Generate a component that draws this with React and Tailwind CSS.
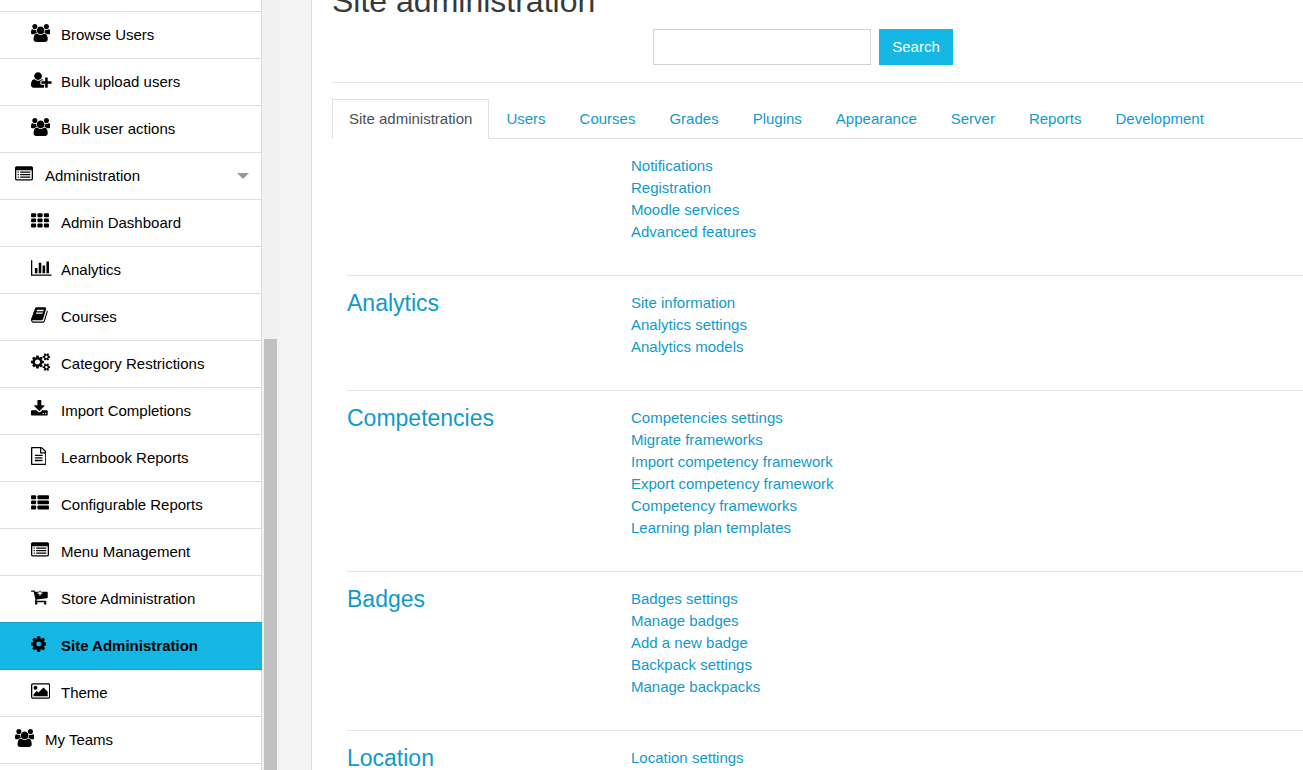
import React, { useState } from 'react'

// Each icon: width of its viewBox, left edge of it, and the shape
const ICONS = {
  users: {
    w: 1920,
    d: 'M593 896q-162 5-265 128h-134q-82 0-138-40.5t-56-118.5q0-353 124-353 6 0 43.5 21t97.5 42.5 119 21.5q67 0 133-23-5 37-5 66 0 139 81 256zm1071 637q0 120-73 189.5t-194 69.5h-874q-121 0-194-69.5t-73-189.5q0-53 3.5-103.5t14-109 26.5-108.5 43-97.5 62-81 85.5-53.5 111.5-20q10 0 43 21.5t73 48 107 48 135 21.5 135-21.5 107-48 73-48 43-21.5q61 0 111.5 20t85.5 53.5 62 81 43 97.5 26.5 108.5 14 109 3.5 103.5zm-1024-1277q0 106-75 181t-181 75-181-75-75-181 75-181 181-75 181 75 75 181zm704 384q0 159-112.5 271.5t-271.5 112.5-271.5-112.5-112.5-271.5 112.5-271.5 271.5-112.5 271.5 112.5 112.5 271.5zm576 225q0 78-56 118.5t-138 40.5h-134q-103-123-265-128 81-117 81-256 0-29-5-66 66 23 133 23 59 0 119-21.5t97.5-42.5 43.5-21q124 0 124 353zm-128-609q0 106-75 181t-181 75-181-75-75-181 75-181 181-75 181 75 75 181z',
  },
  userPlus: {
    w: 2048,
    d: 'M704 896q-159 0-271.5-112.5t-112.5-271.5 112.5-271.5 271.5-112.5 271.5 112.5 112.5 271.5-112.5 271.5-271.5 112.5zm960 128h352q13 0 22.5 9.5t9.5 22.5v192q0 13-9.5 22.5t-22.5 9.5h-352v352q0 13-9.5 22.5t-22.5 9.5h-192q-13 0-22.5-9.5t-9.5-22.5v-352h-352q-13 0-22.5-9.5t-9.5-22.5v-192q0-13 9.5-22.5t22.5-9.5h352v-352q0-13 9.5-22.5t22.5-9.5h192q13 0 22.5 9.5t9.5 22.5v352zm-736 224q0 52 38 90t90 38h256v238q-68 50-171 50h-874q-121 0-194-69t-73-190q0-53 3.5-103.5t14-109 26.5-108.5 43-97.5 62-81 85.5-53.5 111.5-20q19 0 39 17 79 61 154.5 91.5t164.5 30.5 164.5-30.5 154.5-91.5q20-17 39-17 132 0 217 96h-223q-52 0-90 38t-38 90v192z',
  },
  listAlt: {
    w: 1792,
    d: 'M384 1184v64q0 13-9.5 22.5t-22.5 9.5h-64q-13 0-22.5-9.5t-9.5-22.5v-64q0-13 9.5-22.5t22.5-9.5h64q13 0 22.5 9.5t9.5 22.5zm0-256v64q0 13-9.5 22.5t-22.5 9.5h-64q-13 0-22.5-9.5t-9.5-22.5v-64q0-13 9.5-22.5t22.5-9.5h64q13 0 22.5 9.5t9.5 22.5zm0-256v64q0 13-9.5 22.5t-22.5 9.5h-64q-13 0-22.5-9.5t-9.5-22.5v-64q0-13 9.5-22.5t22.5-9.5h64q13 0 22.5 9.5t9.5 22.5zm1152 512v64q0 13-9.5 22.5t-22.5 9.5h-960q-13 0-22.5-9.5t-9.5-22.5v-64q0-13 9.5-22.5t22.5-9.5h960q13 0 22.5 9.5t9.5 22.5zm0-256v64q0 13-9.5 22.5t-22.5 9.5h-960q-13 0-22.5-9.5t-9.5-22.5v-64q0-13 9.5-22.5t22.5-9.5h960q13 0 22.5 9.5t9.5 22.5zm0-256v64q0 13-9.5 22.5t-22.5 9.5h-960q-13 0-22.5-9.5t-9.5-22.5v-64q0-13 9.5-22.5t22.5-9.5h960q13 0 22.5 9.5t9.5 22.5zm128 704v-832q0-13-9.5-22.5t-22.5-9.5h-1472q-13 0-22.5 9.5t-9.5 22.5v832q0 13 9.5 22.5t22.5 9.5h1472q13 0 22.5-9.5t9.5-22.5zm128-1088v1088q0 66-47 113t-113 47h-1472q-66 0-113-47t-47-113v-1088q0-66 47-113t113-47h1472q66 0 113 47t47 113z',
  },
  th: {
    w: 1792,
    rects: [0, 640, 1280].flatMap(x => [128, 640, 1152].map(y => [x, y, 512])),
  },
  thList: {
    w: 1792,
    rects: [128, 640, 1152].flatMap(y => [[0, y, 512], [640, y, 1152]]),
  },
  barChart: {
    w: 2048,
    d: 'M640 896v512h-256v-512h256zm384-512v1024h-256v-1024h256zm1024 1152v128h-2048v-1536h128v1408h1920zm-640-896v768h-256v-768h256zm384-384v1152h-256v-1152h256z',
  },
  book: {
    w: 1664,
    x: 64,
    d: 'M1703 478q40 57 18 129l-275 906q-19 64-76.5 107.5t-122.5 43.5h-923q-77 0-148.5-53.5t-99.5-131.5q-24-67-2-127 0-4 3-27t4-37q1-8-3-21.5t-3-19.5q2-11 8-21t16.5-23.5 16.5-23.5q23-38 45-91.5t30-91.5q3-10 .5-30t-.5-28q3-11 17-28t17-23q21-36 42-92t25-90q1-9-2.5-32t.5-28q4-13 22-30.5t22-22.5q19-26 42.5-84.5t27.5-96.5q1-8-3-25.5t-2-26.5q2-8 9-18t18-23 17-21q8-12 16.5-30.5t15-35 16-36 19.5-32 26.5-23.5 36-11.5 47.5 5.5l-1 3q38-9 51-9h761q74 0 114 56t18 130l-274 906q-36 119-71.5 153.5t-128.5 34.5h-869q-27 0-38 15-11 16-1 43 24 70 144 70h923q29 0 56-15.5t35-41.5l300-987q7-22 5-57 38 15 59 43zm-1064 2q-4 13 2 22.5t20 9.5h608q13 0 25.5-9.5t16.5-22.5l21-64q4-13-2-22.5t-20-9.5h-608q-13 0-25.5 9.5t-16.5 22.5zm-83 256q-4 13 2 22.5t20 9.5h608q13 0 25.5-9.5t16.5-22.5l21-64q4-13-2-22.5t-20-9.5h-608q-13 0-25.5 9.5t-16.5 22.5z',
  },
  cogs: {
    w: 1920,
    d: 'M896 896q0-106-75-181t-181-75-181 75-75 181 75 181 181 75 181-75 75-181zm768 512q0-52-38-90t-90-38-90 38-38 90q0 53 37.5 90.5t90.5 37.5 90.5-37.5 37.5-90.5zm0-1024q0-52-38-90t-90-38-90 38-38 90q0 53 37.5 90.5t90.5 37.5 90.5-37.5 37.5-90.5zm-384 421v185q0 10-7 19.5t-16 10.5l-155 24q-11 35-32 76 34 48 90 115 7 11 7 20 0 12-7 19-23 30-82.5 89.5t-78.5 59.5q-11 0-21-7l-115-90q-37 19-77 31-11 108-23 155-7 24-30 24h-186q-11 0-20-7.5t-10-17.5l-23-153q-34-10-75-31l-118 89q-7 7-20 7-11 0-21-8-144-133-144-160 0-9 7-19 10-14 41-53t47-61q-23-44-35-82l-152-24q-10-1-17-9.5t-7-19.5v-185q0-10 7-19.5t16-10.5l155-24q11-35 32-76-34-48-90-115-7-11-7-20 0-12 7-20 22-30 82-89t79-59q11 0 21 7l115 90q34-18 77-32 11-108 23-154 7-24 30-24h186q11 0 20 7.5t10 17.5l23 153q34 10 75 31l118-89q8-7 20-7 11 0 21 8 144 133 144 160 0 8-7 19-12 16-42 54t-45 60q23 48 34 82l152 23q10 2 17 10.5t7 19.5zm640 533v140q0 16-149 31-12 27-30 52 51 113 51 138 0 4-4 7-122 71-124 71-8 0-46-47t-52-68q-20 2-30 2t-30-2q-14 21-52 68t-46 47q-2 0-124-71-4-3-4-7 0-25 51-138-18-25-30-52-149-15-149-31v-140q0-16 149-31 13-29 30-52-51-113-51-138 0-4 4-7 4-2 35-20t59-34 30-16q8 0 46 46.5t52 67.5q20-2 30-2t30 2q51-71 92-112l6-2q4 0 124 70 4 3 4 7 0 25-51 138 17 23 30 52 149 15 149 31zm0-1024v140q0 16-149 31-12 27-30 52 51 113 51 138 0 4-4 7-122 71-124 71-8 0-46-47t-52-68q-20 2-30 2t-30-2q-14 21-52 68t-46 47q-2 0-124-71-4-3-4-7 0-25 51-138-18-25-30-52-149-15-149-31v-140q0-16 149-31 13-29 30-52-51-113-51-138 0-4 4-7 4-2 35-20t59-34 30-16q8 0 46 46.5t52 67.5q20-2 30-2t30 2q51-71 92-112l6-2q4 0 124 70 4 3 4 7 0 25-51 138 17 23 30 52 149 15 149 31z',
  },
  download: {
    w: 1664,
    x: 64,
    d: 'M1344 1344q0-26-19-45t-45-19-45 19-19 45 19 45 45 19 45-19 19-45zm256 0q0-26-19-45t-45-19-45 19-19 45 19 45 45 19 45-19 19-45zm128-224v320q0 40-28 68t-68 28h-1472q-40 0-68-28t-28-68v-320q0-40 28-68t68-28h465l135 136q58 56 136 56t136-56l136-136h464q40 0 68 28t28 68zm-325-569q17 41-14 70l-448 448q-18 19-45 19t-45-19l-448-448q-31-29-14-70 17-39 59-39h256v-448q0-26 19-45t45-19h256q26 0 45 19t19 45v448h256q42 0 59 39z',
  },
  fileText: {
    w: 1536,
    x: 128,
    d: 'M1596 380q28 28 48 76t20 88v1152q0 40-28 68t-68 28h-1344q-40 0-68-28t-28-68v-1600q0-40 28-68t68-28h896q40 0 88 20t76 48zm-444-244v376h376q-10-29-22-41l-313-313q-12-12-41-22zm384 1528v-1024h-416q-40 0-68-28t-28-68v-416h-768v1536h1280zm-1024-864q0-14 9-23t23-9h704q14 0 23 9t9 23v64q0 14-9 23t-23 9h-704q-14 0-23-9t-9-23v-64zm736 224q14 0 23 9t9 23v64q0 14-9 23t-23 9h-704q-14 0-23-9t-9-23v-64q0-14 9-23t23-9h704zm0 256q14 0 23 9t9 23v64q0 14-9 23t-23 9h-704q-14 0-23-9t-9-23v-64q0-14 9-23t23-9h704z',
  },
  cartPlus: {
    w: 1664,
    x: 64,
    d: 'M1216 512q0-26-19-45t-45-19h-128v-128q0-26-19-45t-45-19-45 19-19 45v128h-128q-26 0-45 19t-19 45 19 45 45 19h128v128q0 26 19 45t45 19 45-19 19-45v-128h128q26 0 45-19t19-45zm-512 1024q0 53-37.5 90.5t-90.5 37.5-90.5-37.5-37.5-90.5 37.5-90.5 90.5-37.5 90.5 37.5 37.5 90.5zm896 0q0 53-37.5 90.5t-90.5 37.5-90.5-37.5-37.5-90.5 37.5-90.5 90.5-37.5 90.5 37.5 37.5 90.5zm128-1088v512q0 24-16 42.5t-41 21.5l-1044 122q1 7 4.5 21.5t6 26.5 2.5 22q0 16-24 64h920q26 0 45 19t19 45-19 45-45 19h-1024q-26 0-45-19t-19-45q0-14 11-39.5t29.5-59.5 20.5-38l-177-823h-204q-26 0-45-19t-19-45 19-45 45-19h256q16 0 28.5 6.5t20 15.5 13 24.5 7.5 26.5 5.5 29.5 4.5 25.5h1201q26 0 45 19t19 45z',
  },
  cog: {
    w: 1536,
    x: 128,
    d: 'M1152 896q0-106-75-181t-181-75-181 75-75 181 75 181 181 75 181-75 75-181zm512-109v222q0 12-8 23t-20 13l-185 28q-19 54-39 91 35 50 107 138 10 12 10 25t-9 23q-27 37-99 108t-94 71q-12 0-26-9l-138-108q-44 23-91 38-16 136-29 186-7 28-36 28h-222q-14 0-24.5-8.5t-11.5-21.5l-28-184q-49-16-90-37l-141 107q-10 9-25 9-14 0-25-11-126-114-165-168-7-10-7-23 0-12 8-23 15-21 51-66.5t54-70.5q-27-50-41-99l-183-27q-13-2-21-12.5t-8-23.5v-222q0-12 8-23t19-13l186-28q14-46 39-92-40-57-107-138-10-12-10-24 0-10 9-23 26-36 98.5-107.5t94.5-71.5q13 0 26 10l138 107q44-23 91-38 16-136 29-186 7-28 36-28h222q14 0 24.5 8.5t11.5 21.5l28 184q49 16 90 37l142-107q9-9 24-9 13 0 25 10 129 119 165 170 7 8 7 22 0 12-8 23-15 21-51 66.5t-54 70.5q26 50 41 98l183 28q13 2 21 12.5t8 23.5z',
  },
  image: {
    w: 1920,
    d: 'M640 576q0 80-56 136t-136 56-136-56-56-136 56-136 136-56 136 56 56 136zm1024 384v448h-1408v-192l320-320 160 160 512-512zm96-704h-1600q-13 0-22.5 9.5t-9.5 22.5v1216q0 13 9.5 22.5t22.5 9.5h1600q13 0 22.5-9.5t9.5-22.5v-1216q0-13-9.5-22.5t-22.5-9.5zm160 32v1216q0 66-47 113t-113 47h-1600q-66 0-113-47t-47-113v-1216q0-66 47-113t113-47h1600q66 0 113 47t47 113z',
  },
}

const MENU = [
  { label: 'Browse Users', icon: 'users', child: true },
  { label: 'Bulk upload users', icon: 'userPlus', child: true },
  { label: 'Bulk user actions', icon: 'users', child: true },
  { label: 'Administration', icon: 'listAlt', expandable: true },
  { label: 'Admin Dashboard', icon: 'th', child: true },
  { label: 'Analytics', icon: 'barChart', child: true },
  { label: 'Courses', icon: 'book', child: true },
  { label: 'Category Restrictions', icon: 'cogs', child: true },
  { label: 'Import Completions', icon: 'download', child: true },
  { label: 'Learnbook Reports', icon: 'fileText', child: true },
  { label: 'Configurable Reports', icon: 'thList', child: true },
  { label: 'Menu Management', icon: 'listAlt', child: true },
  { label: 'Store Administration', icon: 'cartPlus', child: true },
  { label: 'Site Administration', icon: 'cog', child: true, active: true },
  { label: 'Theme', icon: 'image', child: true },
  { label: 'My Teams', icon: 'users' },
]

const TABS = [
  'Site administration', 'Users', 'Courses', 'Grades', 'Plugins',
  'Appearance', 'Server', 'Reports', 'Development',
]

const SECTIONS = [
  { title: '', links: ['Notifications', 'Registration', 'Moodle services', 'Advanced features'] },
  { title: 'Analytics', links: ['Site information', 'Analytics settings', 'Analytics models'] },
  {
    title: 'Competencies',
    links: [
      'Competencies settings', 'Migrate frameworks', 'Import competency framework',
      'Export competency framework', 'Competency frameworks', 'Learning plan templates',
    ],
  },
  {
    title: 'Badges',
    links: ['Badges settings', 'Manage badges', 'Add a new badge', 'Backpack settings', 'Manage backpacks'],
  },
  { title: 'Location', links: ['Location settings'] },
]

function Icon({ name }) {
  const { w, x = 0, d, rects } = ICONS[name]
  return (
    <svg
      viewBox={`${x} 0 ${w} 1792`}
      className="h-[18px] w-auto fill-current"
      aria-hidden="true"
    >
      {d && <path d={d} />}
      {rects && rects.map(([rx, ry, rw]) => (
        <rect key={`${rx}-${ry}`} x={rx} y={ry} width={rw} height={384} rx={96} />
      ))}
    </svg>
  )
}

function MenuItem({ item }) {
  const indent = item.child ? 'pl-[31px]' : 'pl-[15px]'
  // The active row covers the line above it and the panel's right border
  const look = item.active
    ? '-mt-px -mr-px h-12 border-y border-[#109fc8] bg-[#15b7e5] font-bold'
    : 'h-[47px] border-b border-[#ddd]'
  return (
    <li>
      <a href="#" className={`flex items-center pr-3 ${indent} ${look}`}>
        <span className="w-[30px] shrink-0 pb-1">
          <Icon name={item.icon} />
        </span>
        <span className="flex-1">{item.label}</span>
        {item.expandable && (
          <svg viewBox="0 0 12 6" className="h-[6px] w-3 fill-[#999]" aria-hidden="true">
            <path d="M0 0h12L6 6z" />
          </svg>
        )}
      </a>
    </li>
  )
}

function Sidebar() {
  return (
    <aside className="flex shrink-0 bg-[#f1f1f1]">
      <nav className="w-[262px] border-r border-[#ddd] bg-white text-black">
        <ul>
          <li className="h-3 border-b border-[#ddd]" />
          {MENU.map(item => <MenuItem key={item.label} item={item} />)}
        </ul>
      </nav>
      {/* Scrollbar */}
      <div className="flex w-[17px] flex-col justify-end px-[2px]">
        <div className="h-[56%] bg-[#c1c1c1]" />
      </div>
    </aside>
  )
}

function Section({ title, links, first }) {
  return (
    <section className={`ml-[15px] flex pt-4 pb-8 ${first ? '' : 'border-t border-[#e5e5e5]'}`}>
      <h3 className="w-[284px] shrink-0 text-[23px] leading-[22px] text-[#109aca]">
        {title && <a href="#">{title}</a>}
      </h3>
      <ul>
        {links.map(link => (
          <li key={link}>
            <a href="#" className="text-[#109aca] hover:underline">{link}</a>
          </li>
        ))}
      </ul>
    </section>
  )
}

export default function App() {
  const [tab, setTab] = useState(TABS[0])
  const [query, setQuery] = useState('')

  return (
    <div className="flex h-screen overflow-hidden bg-[#f3f3f3] font-['Liberation_Sans',Arial,sans-serif] text-[15px] leading-[22px]">
      <Sidebar />

      <main className="ml-8 min-w-0 flex-1 border-l border-[#ddd] bg-white pl-5">
        <h1 className="-mt-[17px] text-[32px] leading-9 text-[#373a3c]">Site administration</h1>

        <form
          className="mt-[10px] mr-[29px] flex justify-center gap-2"
          onSubmit={e => e.preventDefault()}
        >
          <input
            type="text"
            aria-label="Search"
            value={query}
            onChange={e => setQuery(e.target.value)}
            className="h-9 w-[218px] border border-[#ced4da] bg-white px-3 outline-none"
          />
          <button type="submit" className="h-9 w-[74px] bg-[#15b7e5] text-white">Search</button>
        </form>

        <hr className="my-4 mt-[17px] border-[#e5e5e5]" />

        <div role="tablist" className="flex border-b border-[#dee2e6]">
          {TABS.map(name => (
            <button
              key={name}
              role="tab"
              aria-selected={name === tab}
              onClick={() => setTab(name)}
              className={`-mb-px border px-4 py-2 whitespace-nowrap ${
                name === tab
                  ? 'border-[#dee2e6] border-b-white bg-white text-[#495057]'
                  : 'border-transparent text-[#109aca]'
              }`}
            >
              {name}
            </button>
          ))}
        </div>

        {SECTIONS.map((section, i) => (
          <Section key={section.title} {...section} first={i === 0} />
        ))}
      </main>
    </div>
  )
}
